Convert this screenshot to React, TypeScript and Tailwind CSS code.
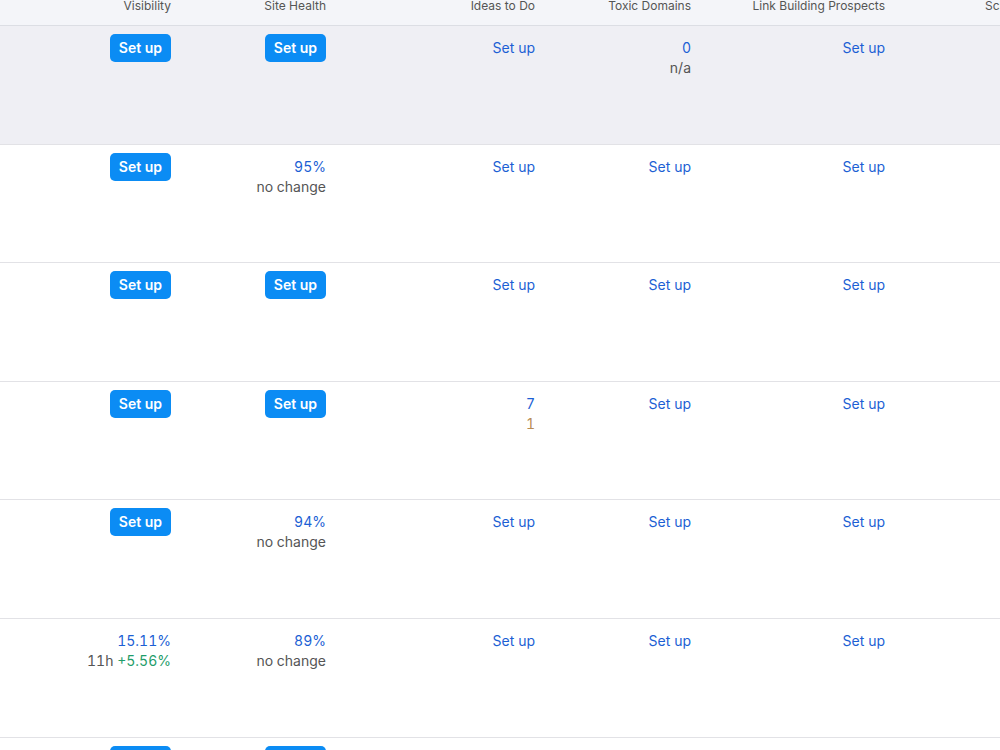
import React from 'react';

type Cell =
  | { kind: 'button' }
  | { kind: 'link' }
  | { kind: 'text'; top: React.ReactNode; bottom?: React.ReactNode };

interface Row {
  id: string;
  highlighted?: boolean;
  cells: Cell[];
}

const columns = ['Visibility', 'Site Health', 'Ideas to Do', 'Toxic Domains', 'Link Building Prospects'];
const widths = ['w-[171px]', 'w-[155px]', 'w-[209px]', 'w-[156px]', 'w-[194px]'];

const btn: Cell = { kind: 'button' };
const link: Cell = { kind: 'link' };

const rows: Row[] = [
  {
    id: 'r1',
    highlighted: true,
    cells: [btn, btn, link, { kind: 'text', top: '0', bottom: <span className="text-[#555]">n/a</span> }, link],
  },
  {
    id: 'r2',
    cells: [btn, { kind: 'text', top: '95%', bottom: <span className="text-[#555]">no change</span> }, link, link, link],
  },
  { id: 'r3', cells: [btn, btn, link, link, link] },
  {
    id: 'r4',
    cells: [btn, btn, { kind: 'text', top: '7', bottom: <span className="text-[#b88b55]">1</span> }, link, link],
  },
  {
    id: 'r5',
    cells: [btn, { kind: 'text', top: '94%', bottom: <span className="text-[#555]">no change</span> }, link, link, link],
  },
  {
    id: 'r6',
    cells: [
      {
        kind: 'text',
        top: '15.11%',
        bottom: (
          <>
            <span className="text-[#555]">11h </span>
            <span className="text-[#1f9d6a]">+5.56%</span>
          </>
        ),
      },
      { kind: 'text', top: '89%', bottom: <span className="text-[#555]">no change</span> },
      link,
      link,
      link,
    ],
  },
  { id: 'r7', cells: [btn, btn, link, link, link] },
];

function CellView({ cell }: { cell: Cell }) {
  if (cell.kind === 'button') {
    return (
      <button className="-mt-[4px] h-[28px] rounded-[5px] bg-[#0b8cf4] px-[9px] text-[14px] font-semibold text-white">
        Set up
      </button>
    );
  }
  if (cell.kind === 'link') {
    return <span className="text-[#1c5fd4]">Set up</span>;
  }
  return (
    <div className="flex flex-col items-end tabular-nums">
      <span className="text-[#1c5fd4]">{cell.top}</span>
      {cell.bottom && <span>{cell.bottom}</span>}
    </div>
  );
}

export default function App() {
  return (
    <div className="h-[750px] w-[1000px] overflow-hidden bg-white font-['Inter',sans-serif] text-[14px] leading-5">
      {/* header, scrolled so only the lower part shows */}
      <div className="flex h-[26px] border-b border-[#dcdee4] bg-[#f4f5f9] text-[12px] text-[#555]">
        {columns.map((c, i) => (
          <div key={c} className={`${widths[i]} shrink-0 text-right leading-[11px]`}>
            {c}
          </div>
        ))}
        <div className="shrink-0 pl-[100px] leading-[11px]">Schema Markup</div>
      </div>

      {rows.map(row => (
        <div
          key={row.id}
          className={`flex h-[118.6px] border-b border-[#e2e2e6] ${row.highlighted ? 'bg-[#efeff4]' : 'bg-white'}`}
        >
          {row.cells.map((cell, i) => (
            <div key={i} className={`${widths[i]} flex shrink-0 justify-end pt-[12px]`}>
              <CellView cell={cell} />
            </div>
          ))}
        </div>
      ))}
    </div>
  );
}
